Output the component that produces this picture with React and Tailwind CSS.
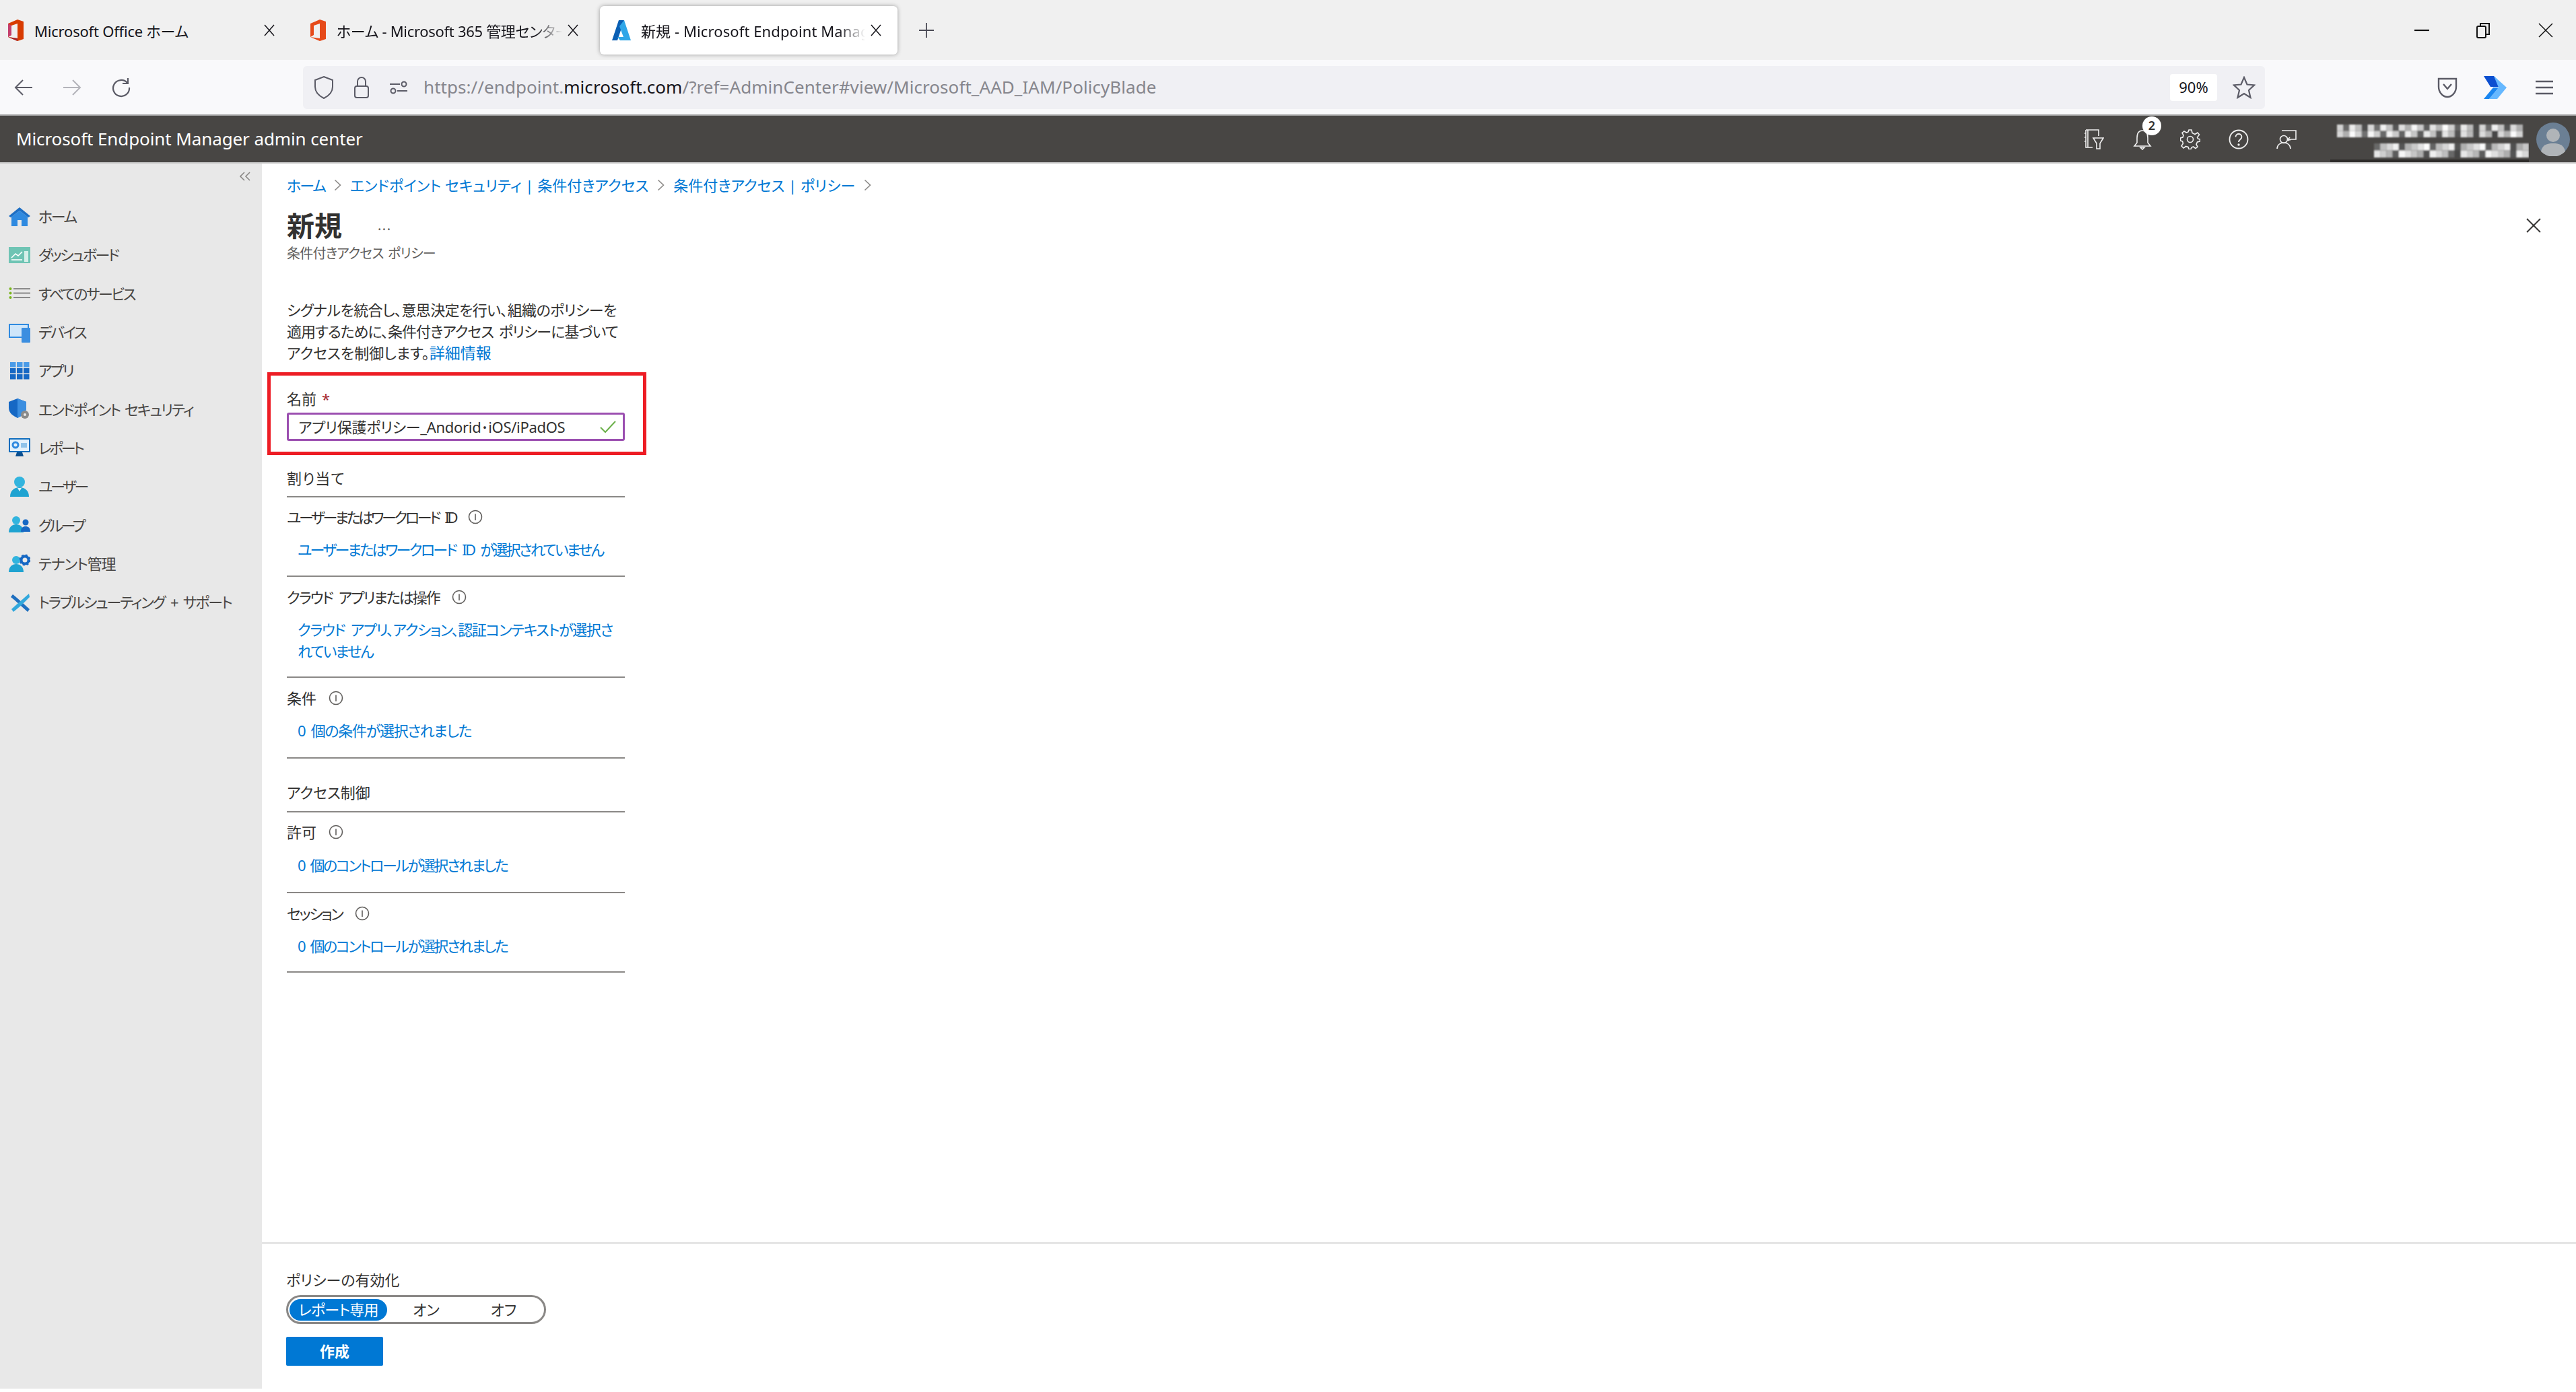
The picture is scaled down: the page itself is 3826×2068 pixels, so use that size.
import React from "react";

const Ic = ({ w = 32, h = 32, vb = "0 0 32 32", children, className = "" }) => (
  <svg width={w} height={h} viewBox={vb} fill="none" className={"shrink-0 " + className}>{children}</svg>
);

const OfficeLogo = ({ colored }) => (
  <svg width="26" height="32" viewBox="0 0 26 32" className="shrink-0">
    <path d="M2 6 L16 0 L25 3 V29 L16 32 L2 26 L16 28 V6 L7 9 V23 L2 26 Z" fill={colored ? "#d83b01" : "#e64a19"} />
    {colored && <path d="M2 26 L16 32 L16 28 Z" fill="#a4262c" />}
    {colored && <path d="M2 6 V26 L7 23 V9 Z" fill="#c43e6d" />}
  </svg>
);

const AzureLogo = () => (
  <svg width="28" height="32" viewBox="0 0 28 32" className="shrink-0">
    <path d="M10 1 H18 L8 31 H0 Z" fill="#0a5fb4" />
    <path d="M18 1 L28 31 H12 L8 26 H17 L11 10 Z" fill="#2fa6e8" />
  </svg>
);

const Tab = ({ width, logo, text, fade, active, closeW, pr, pl, textCls }) => (
  <div
    className={
      "flex items-center h-[72px] shrink-0 rounded-[6px] " +
      (active ? "bg-white shadow-[0_0_6px_rgba(0,0,0,0.35)]" : "")
    }
    style={{ width, paddingLeft: pl, paddingRight: pr }}
  >
    {logo}
    <span
      className={
        "ml-[15px] pt-[3px] flex-1 overflow-hidden whitespace-nowrap text-[#15141a] " + textCls + " " +
        (fade ? "[mask-image:linear-gradient(to_right,black_88%,transparent)]" : "")
      }
    >
      {text}
    </span>
    <span className="flex justify-center" style={{ width: closeW }}>
      <svg width="18" height="20" viewBox="0 0 18 20" stroke="#15141a" strokeWidth="1.5"><path d="M2 2 L16 18 M16 2 L2 18" /></svg>
    </span>
  </div>
);

const shades = (seed, n) =>
  Array.from({ length: n }, (_, i) => {
    const v = ((i + 1) * (seed + 7) * 2654435761 % 1000) / 1000;
    const c = Math.round(v < 0.28 ? 70 + v * 150 : 140 + v * 115);
    return `rgb(${c},${c},${c})`;
  });

const Mosaic = () => (
  <svg width="295" height="73" viewBox="0 0 295 73" className="ml-[29px] shrink-0">
    <defs>
      <filter id="mos" x="-5%" y="-5%" width="110%" height="110%"><feGaussianBlur stdDeviation="0.9" /></filter>
    </defs>
    <g filter="url(#mos)">
      {[0, 1].map((row) =>
        shades(3 + row * 4, 30).map((c, i) => (
          <rect key={"a" + row + i} x={10 + i * 9.2} y={15 + row * 9.5} width="9.2" height="9.5" fill={c} />
        ))
      )}
      {[0, 1].map((row) =>
        shades(13 + row * 6, 25).map((c, i) => (
          <rect key={"b" + row + i} x={65 + i * 9.2} y={43 + row * 10.5} width="9.2" height="10.5" fill={c} />
        ))
      )}
    </g>
    <rect x="0" y="67" width="295" height="4" fill="#2e2c2a" />
  </svg>
);

const SideIcons = {
  home: (
    <Ic>
      <path d="M16 2 L32 15 L29 17 L16 7 L3 17 L0 15 Z" fill="#1e6fc4" />
      <path d="M4 16 L16 7 L28 16 V30 H19 V21 H13 V30 H4 Z" fill="#2f8ae0" />
    </Ic>
  ),
  dash: (
    <Ic>
      <rect x="0" y="4" width="32" height="24" fill="#6fc4b4" />
      <path d="M4 20 L10 14 L14 17 L20 11" stroke="#fff" strokeWidth="1.6" />
      <path d="M4 23 H20" stroke="#fff" strokeWidth="1.6" />
      <rect x="23" y="10" width="6" height="16" fill="#d5efe9" />
    </Ic>
  ),
  all: (
    <Ic>
      <circle cx="2.5" cy="9" r="2" fill="#7ab51d" />
      <circle cx="2.5" cy="15.5" r="2" fill="#7ab51d" />
      <circle cx="2.5" cy="22" r="2" fill="#7ab51d" />
      <path d="M7 9 H32 M7 15.5 H32 M7 22 H32" stroke="#8a8a8a" strokeWidth="2" />
    </Ic>
  ),
  device: (
    <Ic>
      <rect x="0" y="3" width="30" height="21" fill="#2f8ae0" />
      <rect x="2" y="5" width="26" height="17" fill="#cfe6fa" />
      <rect x="19" y="9" width="13" height="22" rx="1" fill="#3b8ee0" />
    </Ic>
  ),
  apps: (
    <Ic>
      {[0, 1, 2].flatMap((r) =>
        [0, 1, 2].map((c) => (
          <rect key={r + "-" + c} x={2 + c * 10} y={3 + r * 9} width="8.5" height="7.5" fill={r === 0 ? "#4a9be8" : "#1668c4"} />
        ))
      )}
    </Ic>
  ),
  sec: (
    <Ic>
      <path d="M0 5 L13 0 L26 5 V14 C26 22 19 26 13 29 C7 26 0 22 0 14 Z" fill="#1668c4" />
      <path d="M13 0 L26 5 V14 C26 22 19 26 13 29 Z" fill="#3b8ee0" />
      <circle cx="24" cy="24" r="6" fill="#8a8a8a" />
      <circle cx="24" cy="24" r="2" fill="#e9e9e9" />
    </Ic>
  ),
  report: (
    <Ic>
      <rect x="0" y="2" width="32" height="21" rx="1" fill="#0f6cbd" />
      <rect x="2" y="4" width="28" height="17" fill="#e3f1fb" />
      <circle cx="10" cy="12" r="4" fill="none" stroke="#2f8ae0" strokeWidth="3" />
      <rect x="18" y="9" width="9" height="7" fill="#8fc3ea" />
      <path d="M12 23 H20 L22 29 H10 Z" fill="#0b4f8f" />
    </Ic>
  ),
  user: (
    <Ic>
      <circle cx="16" cy="9" r="8" fill="#32b4de" />
      <path d="M2 31 C2 22 8 17 16 17 C24 17 30 22 30 31 Z" fill="#1fa3d1" />
      <path d="M13 18 L16 23 L19 18 Z" fill="#dff3fa" />
    </Ic>
  ),
  group: (
    <Ic>
      <circle cx="11" cy="9" r="6" fill="#32b4de" />
      <path d="M0 27 C0 19 5 15 11 15 C17 15 22 19 22 27 Z" fill="#1fa3d1" />
      <circle cx="25" cy="12" r="4.5" fill="#1668c4" />
      <path d="M18 26 C18 20 21 18 25 18 C29 18 32 20 32 26 Z" fill="#1668c4" />
    </Ic>
  ),
  tenant: (
    <Ic>
      <circle cx="11" cy="11" r="6" fill="#32b4de" />
      <path d="M0 29 C0 21 5 17 11 17 C17 17 22 21 22 29 Z" fill="#1fa3d1" />
      <circle cx="24" cy="11" r="5.5" fill="none" stroke="#1668c4" strokeWidth="4" />
      <circle cx="24" cy="11" r="7.5" fill="none" stroke="#1668c4" strokeWidth="2" strokeDasharray="3 3" />
    </Ic>
  ),
  tool: (
    <Ic>
      <path d="M6 4 L3 8 L8 12 L28 30 L31 26 L12 9 Z" fill="#1f6fbf" />
      <path d="M30 3 L14 17 L4 26 L7 30 L19 20 L31 8 Z" fill="#32a8dc" />
    </Ic>
  ),
};

const navItems = [
  ["home", "ホーム", "tracking-[-2.4px]"],
  ["dash", "ダッシュボード", "tracking-[-2.6px]"],
  ["all", "すべてのサービス", "tracking-[-2.6px]"],
  ["device", "デバイス", "tracking-[-2.4px]"],
  ["apps", "アプリ", "tracking-[-2.4px]"],
  ["sec", "エンドポイント セキュリティ", "tracking-[-2px] [word-spacing:3px]"],
  ["report", "レポート", "tracking-[-3.4px]"],
  ["user", "ユーザー", "tracking-[-3.4px]"],
  ["group", "グループ", "tracking-[-3.4px]"],
  ["tenant", "テナント管理", "tracking-[-1.2px]"],
  ["tool", "トラブルシューティング + サポート", "tracking-[-2.2px] [word-spacing:5px]"],
];

const Info = () => (
  <svg width="22" height="22" viewBox="0 0 22 22" fill="none" className="ml-[18px] shrink-0">
    <circle cx="11" cy="11" r="9.5" stroke="#605e5c" strokeWidth="1.6" />
    <path d="M11 6.5 V16" stroke="#605e5c" strokeWidth="1.6" />
  </svg>
);

const Chevron = () => (
  <svg width="11" height="18" viewBox="0 0 11 18" fill="none" stroke="#8a8886" strokeWidth="1.6" className="shrink-0">
    <path d="M1.5 1.5 L9.5 9 L1.5 16.5" />
  </svg>
);

const Field = ({ label, labelCls = "", children, pt = 14, gap = 16, pb = 23 }) => (
  <div className="border-b-2 border-[#8a8886] w-[502px]" style={{ paddingTop: pt, paddingBottom: pb }}>
    <div className="flex items-center h-[32px] text-[#323130]"><span className={labelCls}>{label}</span><Info /></div>
    <div className="pl-[16px] leading-[32px] text-[#0078d4] whitespace-nowrap" style={{ marginTop: gap }}>{children}</div>
  </div>
);

const Section = ({ children, className = "", pb = 9 }) => (
  <div className={"w-[502px] border-b-2 border-[#8a8886] leading-[32px] text-[#323130] " + className} style={{ paddingBottom: pb }}>{children}</div>
);

export default function App() {
  return (
    <div className="w-[3826px] h-[2068px] overflow-hidden flex flex-col bg-white text-[22px] font-['Noto_Sans','Noto_Sans_CJK_JP',sans-serif] [font-feature-settings:'palt']">
      {/* tab strip */}
      <div className="h-[89px] shrink-0 bg-[#f0f0f0] flex items-center">
        <Tab width={449} pl={10} pr={33} closeW={32} textCls="text-[22px] tracking-[-0.2px]" logo={<OfficeLogo colored />} text="Microsoft Office ホーム" />
        <Tab width={442} pl={10} pr={24} closeW={32} textCls="text-[22px] tracking-[-0.3px]" logo={<OfficeLogo />} text="ホーム - Microsoft 365 管理センター" fade />
        <Tab width={442} pl={18} pr={16} closeW={32} textCls="text-[22px] tracking-[0.1px]" active logo={<AzureLogo />} text="新規 - Microsoft Endpoint Manager admin center" fade />
        <svg width="24" height="24" viewBox="0 0 24 24" stroke="#4a4a55" strokeWidth="1.8" className="ml-[31px]"><path d="M12 1 V23 M1 12 H23" /></svg>
        <div className="ml-auto flex items-center">
          <svg width="22" height="22" viewBox="0 0 22 22" stroke="#111" strokeWidth="2.2"><path d="M0 11 H22" /></svg>
          <svg width="22" height="24" viewBox="0 0 22 24" fill="none" stroke="#111" strokeWidth="2" className="ml-[69px]"><rect x="2" y="6" width="13" height="17" rx="2" /><path d="M7 6 V2 H20 V18 H15" /></svg>
          <svg width="22" height="22" viewBox="0 0 22 22" stroke="#111" strokeWidth="1.5" className="ml-[71px] mr-[34px]"><path d="M1 1 L21 21 M21 1 L1 21" /></svg>
        </div>
      </div>
      {/* nav bar */}
      <div className="h-[81px] shrink-0 bg-[#f9f9fb] flex items-center">
        <svg width="28" height="26" viewBox="0 0 28 26" fill="none" stroke="#5b5b66" strokeWidth="2" className="ml-[21px]"><path d="M27 13 H2 M13 2 L2 13 L13 24" /></svg>
        <svg width="28" height="26" viewBox="0 0 28 26" fill="none" stroke="#b4b4ba" strokeWidth="2" className="ml-[44px]"><path d="M1 13 H26 M15 2 L26 13 L15 24" /></svg>
        <svg width="30" height="30" viewBox="0 0 30 30" fill="none" stroke="#5b5b66" strokeWidth="2.2" className="ml-[44px]"><path d="M24 8 A12 12 0 1 0 27 15" /><path d="M25 1 V9 H17" /></svg>
        <div className="ml-[255px] w-[2914px] h-[64px] rounded-[6px] bg-[#f0f0f4] flex items-center">
          <svg width="30" height="34" viewBox="0 0 30 34" fill="none" stroke="#5b5b66" strokeWidth="2" className="ml-[16px]"><path d="M15 1 L28 6 V16 C28 25 21 30 15 33 C9 30 2 25 2 16 V6 Z" /></svg>
          <svg width="24" height="34" viewBox="0 0 24 34" fill="none" stroke="#5b5b66" strokeWidth="2" className="ml-[29px]"><rect x="2" y="15" width="20" height="17" rx="3" /><path d="M6 15 V8 A6 6 0 0 1 18 8 V15" /></svg>
          <svg width="28" height="20" viewBox="0 0 28 20" fill="none" stroke="#5b5b66" strokeWidth="2" className="ml-[29px]"><path d="M1 5 H16 M12 15 H27" /><circle cx="22" cy="5" r="3.5" /><circle cx="6" cy="15" r="3.5" /></svg>
          <div className="ml-[23px] whitespace-nowrap text-[26px] tracking-[0.06px] text-[#86868d]">
            https://endpoint.<span className="text-[#15141a]">microsoft.com</span>/?ref=AdminCenter#view/Microsoft_AAD_IAM/PolicyBlade
          </div>
          <div className="ml-auto w-[70px] h-[40px] bg-white rounded-[4px] flex items-center justify-center text-[22px] text-[#15141a]">90%</div>
          <svg width="34" height="34" viewBox="0 0 34 34" fill="none" stroke="#5b5b66" strokeWidth="2.2" className="ml-[23px] mr-[14px]"><path d="M17 2 L21.5 12.5 L32 13.5 L24 21 L26.5 32 L17 26 L7.5 32 L10 21 L2 13.5 L12.5 12.5 Z" /></svg>
        </div>
        <svg width="30" height="34" viewBox="0 0 30 34" fill="none" stroke="#5b5b66" strokeWidth="2.4" className="ml-[256px]"><path d="M2 4 H28 V16 C28 25 21 31 15 31 C9 31 2 25 2 16 Z" /><path d="M9 12 L15 19 L21 12" /></svg>
        <svg width="34" height="34" viewBox="0 0 34 34" className="ml-[39px]"><path d="M0 0 H15 L30 16 H10 Z" fill="#0c4fd0" /><path d="M15 0 L34 17 L20 34 H8 L22 17 Z" fill="#66b8ff" /><path d="M0 34 L14 17 L22 17 L8 34 Z" fill="#1a86f0" /></svg>
        <svg width="26" height="24" viewBox="0 0 26 24" stroke="#5b5b66" strokeWidth="2.6" className="ml-[43px]"><path d="M0 3 H26 M0 12 H26 M0 21 H26" /></svg>
      </div>
      {/* portal header */}
      <div className="h-[73px] shrink-0 bg-[#484644] border-t-2 border-b-2 border-b-[#c8c8c8] border-t-[#a0a0a0] flex items-center text-white">
        <div className="ml-[24px] text-[26px] tracking-[-0.1px] whitespace-nowrap">Microsoft Endpoint Manager admin center</div>
        <div className="ml-auto flex items-center">
          <div className="w-[71.5px] flex justify-center">
            <svg width="30" height="30" viewBox="0 0 30 30" fill="none" stroke="#f0f0f0" strokeWidth="1.6"><path d="M3 1 H22 V10 M3 1 V27 H13 M6 1 V27 M1 6 H3 M1 12 H3 M1 18 H3" /><path d="M14 13 H29 L24 21 V29 H19 V21 Z" /></svg>
          </div>
          <div className="relative w-[71.5px] flex justify-center">
            <svg width="30" height="32" viewBox="0 0 30 32" fill="none" stroke="#f0f0f0" strokeWidth="1.6"><path d="M15 3 C8 3 7 9 7 14 V21 L3 26 H27 L23 21 V14 C23 9 22 3 15 3 Z" /><path d="M12 28 H18 L15 31 Z" /></svg>
            <span className="absolute left-[36px] top-[-18px] w-[28px] h-[28px] rounded-full bg-white text-[#323130] text-[18px] font-semibold flex items-center justify-center">2</span>
          </div>
          <div className="w-[71.5px] flex justify-center">
            <svg width="30" height="30" viewBox="0 0 30 30" fill="none" stroke="#f0f0f0" strokeWidth="1.6"><circle cx="15" cy="15" r="4.5" /><path d="M13 1 H17 L18 5.5 L22 7.5 L26 5 L28.5 8 L25.5 12 L26.5 14 L29.5 15 V18 L25.5 19 L24 22.5 L26 26 L23 28.5 L19.5 26 L17 27 L16 29.5 H13 L12 26.5 L8.5 25.5 L5 28 L2 25 L4.5 21 L3.5 18 L0.5 17 V13 L4 12 L5 9 L3 5.5 L6 3 L9.5 5 L12 4 Z" /></svg>
          </div>
          <div className="w-[71.5px] flex justify-center">
            <svg width="30" height="30" viewBox="0 0 30 30" fill="none" stroke="#f0f0f0" strokeWidth="1.8"><circle cx="15" cy="15" r="13.5" /><path d="M10.5 11.5 C10.5 5.5 19.5 5.5 19.5 11.5 C19.5 15 15 15 15 19" /><circle cx="15" cy="23" r="0.8" /></svg>
          </div>
          <div className="w-[71.5px] flex justify-center">
            <svg width="30" height="30" viewBox="0 0 30 30" fill="none" stroke="#f0f0f0" strokeWidth="1.6"><path d="M8 2 H29 V15 H20 L17 17" /><circle cx="11" cy="15" r="5.5" /><path d="M1 29 C1 23 6 20 11 20 C16 20 21 23 21 29" /><path d="M20 12 L17 15 L21 16" /></svg>
          </div>
        </div>
        <Mosaic />
        <svg width="50" height="50" viewBox="0 0 50 50" className="ml-[11px] mr-[9px] shrink-0">
          <circle cx="25" cy="25" r="25" fill="#6b7f94" />
          <circle cx="25" cy="19" r="10" fill="#b0b4b8" />
          <path d="M7 43 C9 33 16 31 25 31 C34 31 41 33 43 43 A25 25 0 0 1 7 43 Z" fill="#b0b4b8" />
        </svg>
      </div>
      {/* body */}
      <div className="flex-1 flex min-h-0">
        <aside className="w-[389px] shrink-0 mb-[5px] bg-[#e8e8e8] text-[#323130]">
          <div className="h-[32px] flex justify-end items-center pr-[17px] pt-[6px]">
            <svg width="16" height="14" viewBox="0 0 16 14" fill="none" stroke="#8a8886" strokeWidth="1.6"><path d="M7 1 L1 7 L7 13 M15 1 L9 7 L15 13" /></svg>
          </div>
          <div className="mt-[18px]">
            {navItems.map(([k, t, tr]) => (
              <div key={k} className="h-[57.3px] flex items-center pl-[13px] whitespace-nowrap text-[#484644]">
                {SideIcons[k]}
                <span className={"ml-[12px] " + tr}>{t}</span>
              </div>
            ))}
          </div>
        </aside>
        <main className="flex-1 flex flex-col min-w-0">
          <div className="flex-1 pl-[37px] pr-[52px] min-h-0 flex flex-col items-start relative">
            <div className="h-[64px] flex items-center gap-[13px] text-[#0078d4] whitespace-nowrap">
              <span className="tracking-[-2px]">ホーム</span><Chevron />
              <span>エンドポイント セキュリティ | 条件付きアクセス</span><Chevron />
              <span>条件付きアクセス | ポリシー</span><Chevron />
            </div>
            <div className="h-[56px] w-full flex items-center justify-between">
              <div className="flex items-center">
                <span className="text-[41px] font-semibold text-[#323130] leading-none">新規</span>
                <span className="ml-[53px] text-[#605e5c] text-[20px] tracking-[1.5px]">...</span>
              </div>
              <svg width="22" height="22" viewBox="0 0 22 22" stroke="#323130" strokeWidth="1.8"><path d="M1 1 L21 21 M21 1 L1 21" /></svg>
            </div>
            <div className="h-[28px] flex items-center text-[20px] tracking-[-0.8px] [word-spacing:2px] text-[#605e5c]">条件付きアクセス ポリシー</div>
            <div className="mt-[53px] leading-[32px] text-[#323130] whitespace-nowrap">
              <span className="tracking-[-0.6px]">シグナルを統合し、意思決定を行い、組織のポリシーを</span><br />
              <span className="tracking-[-1px] [word-spacing:3px]">適用するために、条件付きアクセス ポリシーに基づいて</span><br />
              アクセスを制御します。<span className="text-[#0078d4] text-[23px]">詳細情報</span>
            </div>
            <div className="mt-[13px] -ml-[29px] w-[563px] h-[123px] border-[5px] border-[#ed1c24] pl-[24px] pt-[18px]">
              <div className="h-[32px] flex items-center text-[#323130]">名前<span className="ml-[8px] text-[#a4262c]">*</span></div>
              <div className="mt-[5px] w-[502px] h-[42px] border-[3px] border-[#9b4fb0] rounded-[3px] flex items-center pl-[14px] pr-[10px] text-[#323130] justify-between">
                <span className="whitespace-nowrap tracking-[-0.3px]">アプリ保護ポリシー_Andorid･iOS/iPadOS</span>
                <svg width="24" height="20" viewBox="0 0 24 20" fill="none" stroke="#6bb04a" strokeWidth="2"><path d="M1 11 L8 18 L23 2" /></svg>
              </div>
            </div>
            <Section className="mt-[18px] tracking-[1px]" pb={11}>割り当て</Section>
            <Field label="ユーザーまたはワークロード ID" labelCls="tracking-[-3.4px] [word-spacing:6px]" pt={13}><span className="tracking-[-2.7px] [word-spacing:6px]">ユーザーまたはワークロード ID が選択されていません</span></Field>
            <Field label="クラウド アプリまたは操作" labelCls="tracking-[-2px] [word-spacing:5px]" pb={22}><span className="tracking-[-1.4px] [word-spacing:4px]">クラウド アプリ、アクション、認証コンテキストが選択さ</span><br /><span className="tracking-[-2px]">れていません</span></Field>
            <Field label="条件" pb={24}><span className="tracking-[-1.3px] [word-spacing:4px]">0 個の条件が選択されました</span></Field>
            <Section className="mt-[34px]" pb={12}>アクセス制御</Section>
            <Field label="許可" pt={13} gap={17} pb={24}><span className="tracking-[-2.4px] [word-spacing:5px]">0 個のコントロールが選択されました</span></Field>
            <Field label="セッション" labelCls="tracking-[-2.4px]" pb={22}><span className="tracking-[-2.4px] [word-spacing:5px]">0 個のコントロールが選択されました</span></Field>
          </div>
          <div className="h-[223px] shrink-0 border-t-[3px] border-[#e5e5e5] pl-[36px] text-[#323130]">
            <div className="mt-[37px] h-[32px] leading-[32px]">ポリシーの有効化</div>
            <div className="mt-[7px] w-[386px] h-[43px] rounded-full border-[3px] border-[#8a8886] flex items-center pl-[2px]">
              <div className="w-[145px] h-[32px] rounded-full bg-[#0078d4] text-white flex items-center justify-center tracking-[-0.8px]">レポート専用</div>
              <div className="w-[116px] text-center">オン</div>
              <div className="w-[114px] text-center">オフ</div>
            </div>
            <div className="mt-[19px] w-[144px] h-[43px] rounded-[2px] bg-[#0078d4] text-white font-semibold flex items-center justify-center">作成</div>
          </div>
        </main>
      </div>
    </div>
  );
}
